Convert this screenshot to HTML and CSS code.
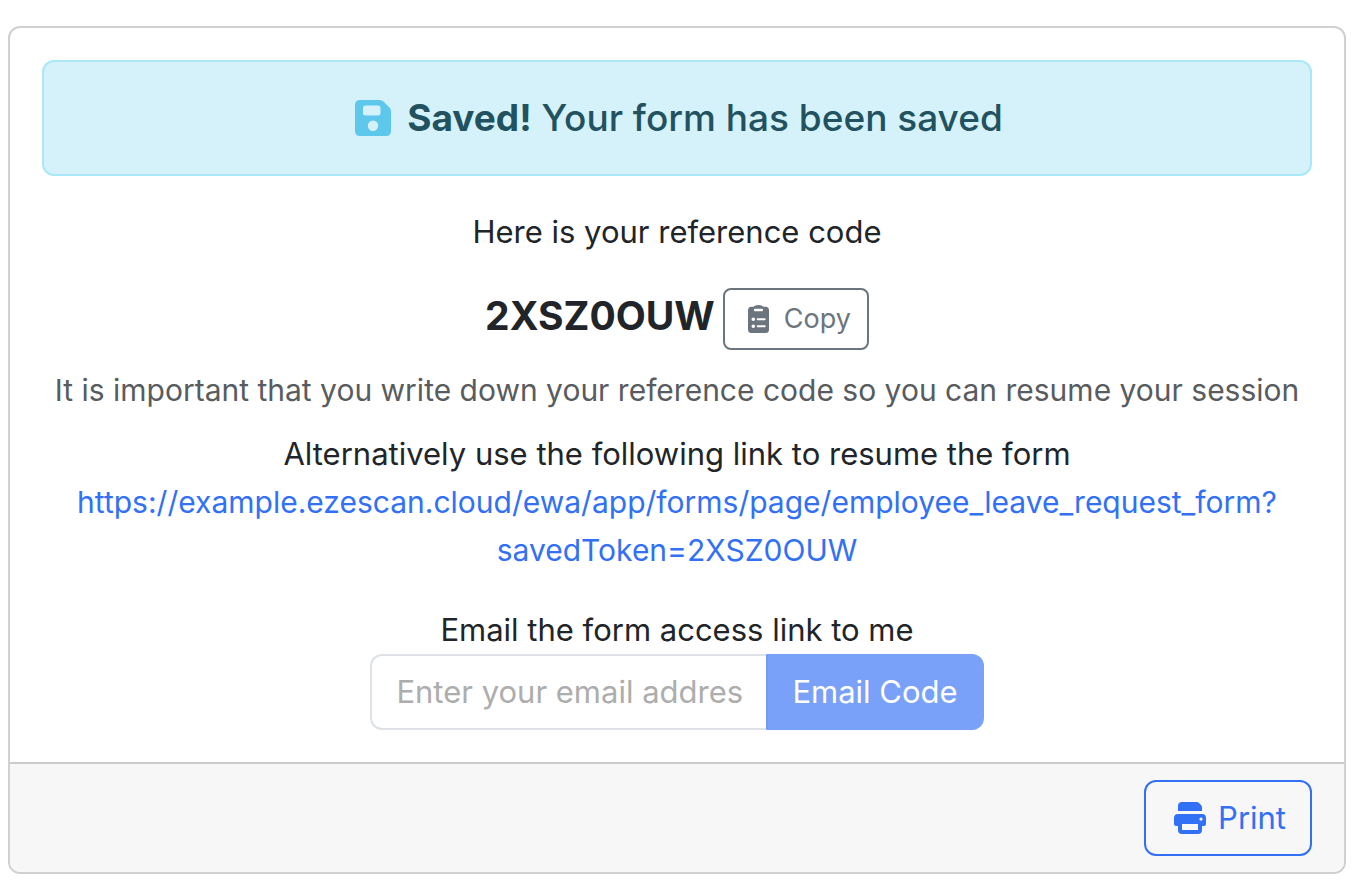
FILE: index.html
```html
<!DOCTYPE html>
<html lang="en">
<head>
    <meta charset="utf-8">
    <meta name="viewport" content="width=device-width, initial-scale=1">
    <title>Form Saved</title>
    <link rel="stylesheet" href="styles.css">
</head>
<body>
    <main class="card">
        <div class="card-body">
            <div class="alert" role="alert">
                <svg class="icon-save" viewBox="0 0 36 36" fill="currentColor" aria-hidden="true">
                    <path fill-rule="evenodd" d="M5 0H24.5Q27 0 28.5 1.5L34.5 7.5Q36 9 36 11.5V31Q36 36 31 36H5Q0 36 0 31V5Q0 0 5 0ZM10.500 5.500Q8 5.500 8 8V13Q8 15.500 10.500 15.500H23Q25.500 15.500 25.500 13V8Q25.500 5.500 23 5.500ZM18 20.500A5.200 5.200 0 1 0 18 30.900A5.200 5.200 0 1 0 18 20.500Z" />
                </svg>
                <p><strong>Saved!</strong> Your form has been saved</p>
            </div>

            <p>Here is your reference code</p>

            <div class="code-row">
                <strong class="code">2XSZ0OUW</strong>
                <button type="button" class="btn btn-copy">
                    <svg class="icon-copy" viewBox="0 0 21 28" fill="currentColor" aria-hidden="true">
                        <path fill-rule="evenodd" d="M3.500 1.800H5.500Q7 0 10.500 0Q14 0 15.500 1.800H17.500Q21 1.800 21 5.300V24.500Q21 28 17.500 28H3.500Q0 28 0 24.500V5.300Q0 1.800 3.500 1.800ZM7.200 3.700A1.300 1.300 0 0 0 7.200 6.300H13.800A1.300 1.300 0 0 0 13.800 3.700ZM5.300 12.500A1.800 1.800 0 1 0 5.300 16.100A1.800 1.800 0 1 0 5.300 12.500ZM9.700 13.300A1 1 0 0 0 9.700 15.300H16.700A1 1 0 0 0 16.700 13.300ZM5.300 19.500A1.800 1.800 0 1 0 5.300 23.100A1.800 1.800 0 1 0 5.300 19.500ZM9.700 20.300A1 1 0 0 0 9.700 22.300H16.700A1 1 0 0 0 16.700 20.300Z" />
                    </svg>
                    Copy
                </button>
            </div>

            <p class="note">It is important that you write down your reference code so you can resume your session</p>

            <div class="resume">
                <p>Alternatively use the following link to resume the form</p>
                <a class="resume-link" href="https://example.ezescan.cloud/ewa/app/forms/page/employee_leave_request_form?savedToken=2XSZ0OUW">https://example.ezescan.cloud/ewa/app/forms/page/employee_leave_request_form?<wbr>savedToken=2XSZ0OUW</a>
            </div>

            <form class="email-form">
                <label for="email">Email the form access link to me</label>
                <div class="input-group">
                    <input type="email" id="email" name="email" placeholder="Enter your email address">
                    <button type="submit" class="btn btn-email" disabled>Email Code</button>
                </div>
            </form>
        </div>

        <div class="card-footer">
            <button type="button" class="btn btn-print">
                <svg class="icon-print" viewBox="0 0 32 32" fill="currentColor" aria-hidden="true">
                    <path d="M8 0H22.500Q24 0 25 1L27 3Q28 4 28 5.500V9H4V4Q4 0 8 0Z" />
                    <path fill-rule="evenodd" d="M4 12H28Q32 12 32 16V22Q32 24 30 24H28V28Q28 32 24 32H8Q4 32 4 28V24H2Q0 24 0 22V16Q0 12 4 12ZM8 22V28H24V22ZM27 15.500A1.600 1.600 0 1 0 27 18.700A1.600 1.600 0 1 0 27 15.500Z" />
                </svg>
                Print
            </button>
        </div>
    </main>
</body>
</html>
```
FILE: styles.css
```css
* {
    margin: 0;
    padding: 0;
    box-sizing: border-box;
}

body {
    background: #fff;
    color: #212529;
    font-family: 'Inter', sans-serif;
    font-size: 31px;
    line-height: 48px;
    padding: 26px 14px 14px 8px;
}

.card {
    border: 2px solid #d0d0d1;
    border-radius: 12px;
    overflow: hidden;
}

.card-body {
    padding: 32px;
    text-align: center;
}

.alert {
    display: flex;
    align-items: center;
    justify-content: center;
    gap: 16px;
    padding: 32px;
    margin-bottom: 32px;
    background: #d5f2fb;
    border: 2px solid #aae8f7;
    border-radius: 12px;
    color: #225260;
    font-size: 37px;
    font-weight: 500;
}

.icon-save {
    width: 36px;
    height: 36px;
    margin-left: 4px;
    color: #5dc8ec;
}

.code-row {
    display: flex;
    align-items: flex-start;
    justify-content: center;
    gap: 8px;
    margin: 32px 0 16px;
}

.code {
    font-size: 39px;
    line-height: 56px;
}

.note,
.resume-link {
    font-size: 30px;
}

.note {
    color: #595c5f;
    margin-bottom: 16px;
}

.resume-link {
    display: block;
    color: #3270f5;
    text-decoration: none;
}

.email-form {
    margin-top: 32px;
}

.email-form label {
    display: block;
}

.input-group {
    display: flex;
    justify-content: center;
}

input {
    width: 396px;
    padding: 12px 24px;
    border: 2px solid #dee2e6;
    border-right: none;
    border-radius: 12px 0 0 12px;
    background: #fff;
    color: #212529;
    font: inherit;
}

input::placeholder {
    color: #adadad;
    opacity: 1;
}

.btn {
    display: inline-flex;
    align-items: center;
    justify-content: center;
    border: 2px solid;
    border-radius: 12px;
    background: transparent;
    font: inherit;
    padding: 12px 24px;
    cursor: pointer;
}

.btn-copy {
    gap: 15px;
    padding: 8px 16px 8px 23px;
    border-radius: 8px;
    color: #6c757d;
    font-size: 27px;
    line-height: 42px;
}

.icon-copy {
    width: 21px;
    height: 28px;
}

.btn-email {
    background: #7aa1f9;
    border-color: #7aa1f9;
    border-left-color: #709af8;
    border-radius: 0 12px 12px 0;
    color: #fff;
    cursor: default;
}

.card-footer {
    display: flex;
    justify-content: flex-end;
    padding: 16px 32px;
    background: #f7f7f7;
    border-top: 2px solid #cbcbcc;
}

.btn-print {
    gap: 12px;
    padding: 12px 24px 12px 28px;
    color: #3270f5;
}

.icon-print {
    width: 32px;
    height: 32px;
}
```
